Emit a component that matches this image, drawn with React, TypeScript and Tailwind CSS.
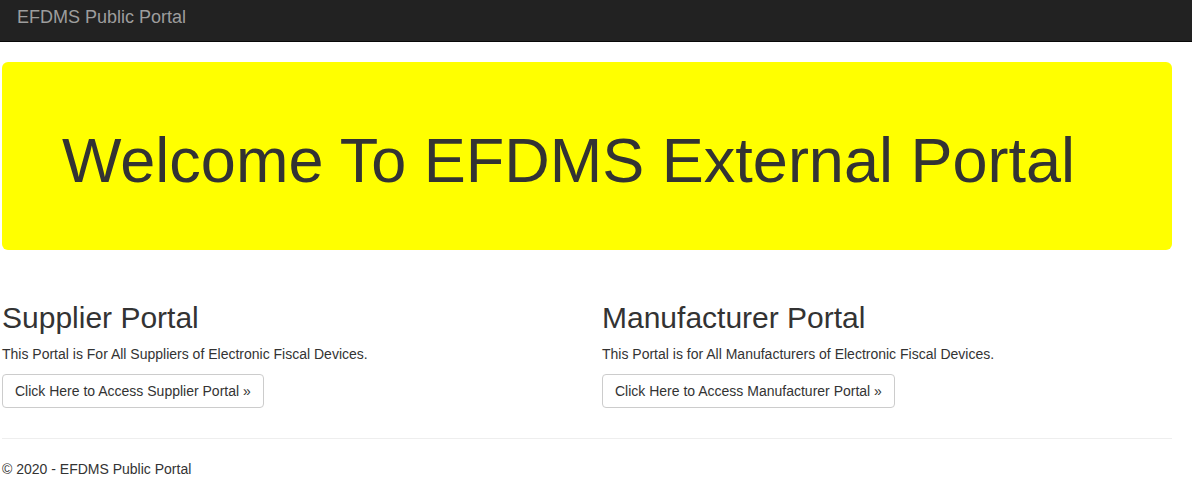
import React from "react";

export default function App() {
  const font = { fontFamily: '"Liberation Sans", Arial, Helvetica, sans-serif' };
  return (
    <div style={font} className="min-h-[489px] bg-white text-[#333] text-[14px] leading-[20px]">
      <nav className="h-[42px] bg-[#222] border-b border-[#080808]">
        <div className="pl-[17px] pt-[7px] text-[18px] leading-[20px] text-[#9d9d9d]">EFDMS Public Portal</div>
      </nav>
      <div className="ml-[2px] w-[1170px] pt-[20px]">
        <div className="h-[188px] rounded-[6px] bg-[#ffff00] pl-[60px] pt-[64px]">
          <h1 className="text-[63px] leading-[69px] text-[#333]">Welcome To EFDMS External Portal</h1>
        </div>
        <div className="mt-[31px] grid grid-cols-[600px_570px]">
          <div>
            <h2 className="mt-[20px] mb-[10px] text-[30px] leading-[33px]">Supplier Portal</h2>
            <p className="mb-[10px]">This Portal is For All Suppliers of Electronic Fiscal Devices.</p>
            <div className="mb-[10px] flex">
              <a className="inline-block rounded-[4px] border border-[#ccc] bg-white px-[12px] py-[6px] text-[14px] leading-[20px] text-[#333]">
                Click Here to Access Supplier Portal »
              </a>
            </div>
          </div>
          <div>
            <h2 className="mt-[20px] mb-[10px] text-[30px] leading-[33px]">Manufacturer Portal</h2>
            <p className="mb-[10px]">This Portal is for All Manufacturers of Electronic Fiscal Devices.</p>
            <div className="mb-[10px] flex">
              <a className="inline-block rounded-[4px] border border-[#ccc] bg-white px-[12px] py-[6px] text-[14px] leading-[20px] text-[#333]">
                Click Here to Access Manufacturer Portal »
              </a>
            </div>
          </div>
        </div>
        <hr className="mt-[20px] mb-[20px] border-0 border-t border-[#eee]" />
        <footer>
          <p>© 2020 - EFDMS Public Portal</p>
        </footer>
      </div>
    </div>
  );
}
